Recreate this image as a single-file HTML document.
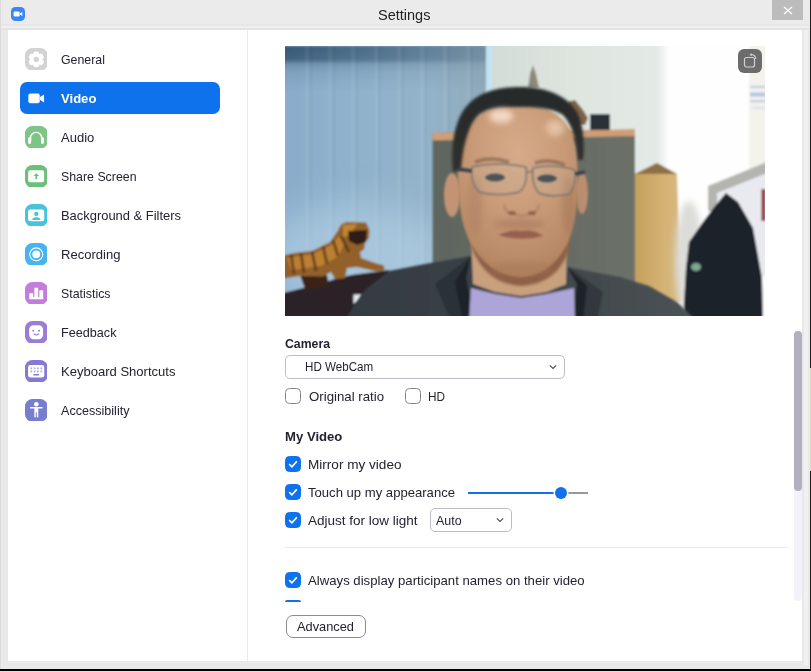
<!DOCTYPE html>
<html><head><meta charset="utf-8"><title>Settings</title>
<style>
html,body{margin:0;padding:0}
body{width:811px;height:672px;overflow:hidden;position:relative;background:#e9e9e9;font-family:"Liberation Sans",sans-serif;color:#232333;font-size:13.3px}
.abs{position:absolute}
.t{position:absolute;white-space:nowrap;line-height:20px;height:20px;transform-origin:0 50%}
#content{left:8px;top:30px;width:794px;height:631px;background:#fff}
#divider{left:247px;top:30px;width:1px;height:631px;background:#eaeaf0}
.ic{position:absolute;left:24.7px;width:22.6px;height:22.6px}
.cb{position:absolute;width:14px;height:14px;border:1px solid #84848e;border-radius:4.5px;background:#fff}
.cb.on{border-color:#0e72ed;background:#0e72ed}
.cb svg{position:absolute;left:0;top:0}
</style></head><body>
<!-- title bar -->
<div class="abs" style="left:0;top:0;width:811px;height:30px;background:#ebebeb"></div>
<div class="abs" style="left:0;top:24px;width:811px;height:2px;background:#e7e7e7"></div>
<div class="abs" style="left:0;top:26px;width:811px;height:2px;background:#efefef"></div>
<div class="abs" style="left:0;top:28px;width:811px;height:2px;background:#e3e3e3"></div>
<div class="abs" id="zicon" style="left:11px;top:7px;width:14px;height:14px;border-radius:4.5px;background:#3b86f5">
<svg width="14" height="14" viewBox="0 0 14 14" style="position:absolute;left:0;top:0"><rect x="2.6" y="4.5" width="6" height="5" rx="1.2" fill="#fff"/><path d="M8.9 6.5 L11.3 4.9 V9.1 L8.9 7.5Z" fill="#fff"/></svg></div>
<div class="abs" id="close" style="left:772px;top:0;width:31px;height:19.5px;background:#bcbcbc">
<svg width="31" height="20" viewBox="0 0 31 20" style="position:absolute;left:0;top:0"><path d="M12 7 L20 14 M20 7 L12 14" stroke="#fff" stroke-width="1.4" fill="none"/></svg></div>

<div class="abs" id="content"></div>
<div class="abs" id="divider"></div>

<!-- sidebar -->
<div class="abs" id="sel" style="left:20px;top:82px;width:200px;height:31.6px;border-radius:7px;background:#0e72ed"></div>
<svg class="ic" style="top:47.6px" viewBox="0 0 23 23"><rect width="23" height="23" rx="7.5" fill="#d3d3d3"/><g fill="#fff"><circle cx="11.5" cy="11.6" r="6.3"/><rect x="8.6" y="3.5" width="5.8" height="16.2" rx="2.2"/><rect x="8.6" y="3.5" width="5.8" height="16.2" rx="2.2" transform="rotate(60 11.5 11.6)"/><rect x="8.6" y="3.5" width="5.8" height="16.2" rx="2.2" transform="rotate(120 11.5 11.6)"/></g><circle cx="11.5" cy="11.6" r="2.7" fill="#d3d3d3"/></svg>
<svg class="ic" style="top:86.6px" viewBox="0 0 23 23"><rect x="3.4" y="6.6" width="11.6" height="10" rx="2" fill="#fff"/><path d="M15.3 10.3 L19.4 7.7 V15.7 L15.3 13.1Z" fill="#fff"/></svg>
<svg class="ic" style="top:125.6px" viewBox="0 0 23 23"><rect width="23" height="23" rx="7.5" fill="#7cc584"/><path d="M5.6 15 V12.2 A5.7 5.7 0 0 1 17 12.2 V15" fill="none" stroke="#fff" stroke-width="1.5"/><rect x="3.2" y="11.5" width="3" height="6.8" rx="1.4" fill="#fff"/><rect x="16.3" y="11.5" width="3" height="6.8" rx="1.4" fill="#fff"/></svg>
<svg class="ic" style="top:164.6px" viewBox="0 0 23 23"><rect width="23" height="23" rx="7.5" fill="#6cbf79"/><rect x="3.2" y="5.4" width="16.3" height="12.2" rx="2.2" fill="#fff"/><path d="M11.5 8.5 L14.3 11.3 H12.4 V14.3 H10.6 V11.3 H8.7Z" fill="#6cbf79"/></svg>
<svg class="ic" style="top:203.6px" viewBox="0 0 23 23"><rect width="23" height="23" rx="7.5" fill="#46c4dc"/><rect x="3.1" y="5.6" width="16.5" height="12" rx="2.4" fill="#fff"/><circle cx="11.5" cy="10.2" r="2.2" fill="#46c4dc"/><path d="M7.4 16.4 Q7.4 13.6 11.5 13.6 Q15.6 13.6 15.6 16.4Z" fill="#46c4dc"/></svg>
<svg class="ic" style="top:242.6px" viewBox="0 0 23 23"><rect width="23" height="23" rx="7.5" fill="#47b3ef"/><circle cx="11.45" cy="11.55" r="6.6" fill="none" stroke="#fff" stroke-width="1.1"/><circle cx="11.45" cy="11.55" r="4" fill="#fff"/></svg>
<svg class="ic" style="top:281.6px" viewBox="0 0 23 23"><rect width="23" height="23" rx="7.5" fill="#c17fd9"/><path d="M4.4 17.5 V11.4 H8.3 V17.5Z M9.5 17.5 V5.8 H13.4 V17.5Z M14.6 17.5 V8.3 H18.5 V17.5Z M4.4 15.6 H18.5 V17.5 H4.4Z" fill="#fff"/></svg>
<svg class="ic" style="top:320.6px" viewBox="0 0 23 23"><rect width="23" height="23" rx="7.5" fill="#9b7dd6"/><rect x="4.2" y="4.3" width="14.2" height="14.4" rx="4.6" fill="#fff"/><circle cx="8.4" cy="9.9" r="1.05" fill="#9b7dd6"/><circle cx="14.3" cy="9.9" r="1.05" fill="#9b7dd6"/><path d="M8.8 12.9 Q11.5 15.6 14.3 12.9" fill="none" stroke="#9b7dd6" stroke-width="1.2"/></svg>
<svg class="ic" style="top:359.6px" viewBox="0 0 23 23"><rect width="23" height="23" rx="7.5" fill="#8679d4"/><rect x="3.1" y="5.2" width="16.5" height="12.7" rx="2.4" fill="#fff"/><g fill="#b4ace4"><rect x="5.5" y="7.6" width="1.8" height="1.8"/><rect x="8.9" y="7.6" width="1.8" height="1.8"/><rect x="12.2" y="7.6" width="1.8" height="1.8"/><rect x="15.7" y="7.6" width="1.8" height="1.8"/><rect x="5.5" y="10.7" width="1.8" height="1.8"/><rect x="8.9" y="10.7" width="1.8" height="1.8"/><rect x="12.2" y="10.7" width="1.8" height="1.8"/><rect x="15.7" y="10.7" width="1.8" height="1.8"/></g><rect x="8.4" y="14.3" width="6" height="1.4" rx=".6" fill="#8679d4"/></svg>
<svg class="ic" style="top:398.6px" viewBox="0 0 23 23"><rect width="23" height="23" rx="7.5" fill="#787ecf"/><circle cx="11.5" cy="5.4" r="2.3" fill="#fff"/><path d="M5.1 8.1 H17.8 V9.6 H13.5 V18.7 H12 V13.6 H11 V18.7 H9.5 V9.6 H5.1Z" fill="#fff"/></svg>


<!-- video -->
<div class="abs" id="video" style="left:285px;top:46px;width:480px;height:270px;background:#8fb0cc;overflow:hidden"><svg width="480" height="270" viewBox="0 0 480 270" style="position:absolute;left:0;top:0">
<defs>
<linearGradient id="gCur" x1="0" x2="1" y1="0" y2="0"><stop offset="0" stop-color="#8aaccb"/><stop offset=".3" stop-color="#8fb1cb"/><stop offset=".7" stop-color="#93b3ca"/><stop offset="1" stop-color="#90aaba"/></linearGradient>
<linearGradient id="gCurV" x1="0" x2="0" y1="0" y2="1"><stop offset="0" stop-color="#fff" stop-opacity="0"/><stop offset=".6" stop-color="#fff" stop-opacity="0"/><stop offset="1" stop-color="#fff" stop-opacity=".12"/></linearGradient>
<linearGradient id="gBandM" x1="0" x2="0" y1="0" y2="1"><stop offset="0" stop-color="#fff"/><stop offset=".3" stop-color="#e0e0e0"/><stop offset=".42" stop-color="#555"/><stop offset=".6" stop-color="#222"/><stop offset="1" stop-color="#000"/></linearGradient>
<mask id="mBand"><rect x="-5" y="0" width="210" height="44" fill="url(#gBandM)"/></mask>
<linearGradient id="gCurH" x1="0" x2="1" y1="0" y2="0"><stop offset="0" stop-color="#143450" stop-opacity=".72"/><stop offset=".6" stop-color="#1c3c58" stop-opacity=".5"/><stop offset="1" stop-color="#1c3c58" stop-opacity=".25"/></linearGradient>
<linearGradient id="gWall" x1="0" x2="1" y1="0" y2="0"><stop offset="0" stop-color="#d2dbd7"/><stop offset=".5" stop-color="#dfe5df"/><stop offset=".93" stop-color="#e3e9e6"/><stop offset="1" stop-color="#ffffff"/></linearGradient>
<linearGradient id="gCab" x1="0" x2="1" y1="0" y2="0"><stop offset="0" stop-color="#5f6660"/><stop offset=".5" stop-color="#636962"/><stop offset="1" stop-color="#6c7169"/></linearGradient>
<linearGradient id="gBox" x1="0" x2="1" y1="0" y2="0"><stop offset="0" stop-color="#c4a05e"/><stop offset=".6" stop-color="#d4b274"/><stop offset="1" stop-color="#d8b87e"/></linearGradient>
<radialGradient id="gFace" cx=".5" cy=".28" r=".8"><stop offset="0" stop-color="#d6ab8a"/><stop offset=".45" stop-color="#c99b78"/><stop offset=".8" stop-color="#b98a66"/><stop offset="1" stop-color="#a47856"/></radialGradient>
<linearGradient id="gJack" x1="0" x2="1" y1="0" y2="0"><stop offset="0" stop-color="#343b42"/><stop offset=".45" stop-color="#3b4247"/><stop offset="1" stop-color="#4b5355"/></linearGradient>
<linearGradient id="gHair" x1="0" x2="0" y1="0" y2="1"><stop offset="0" stop-color="#262928"/><stop offset="1" stop-color="#30302e"/></linearGradient>
<filter id="b1" x="-5%" y="-5%" width="110%" height="110%"><feGaussianBlur stdDeviation="1"/></filter>
<filter id="b2" x="-30%" y="-30%" width="160%" height="160%"><feGaussianBlur stdDeviation="3"/></filter>
<filter id="b4" x="-50%" y="-50%" width="200%" height="200%"><feGaussianBlur stdDeviation="16"/></filter>
<filter id="b3" x="-30%" y="-30%" width="160%" height="160%"><feGaussianBlur stdDeviation="1.8"/></filter>
<clipPath id="vc"><rect width="480" height="270"/></clipPath>
</defs>
<g clip-path="url(#vc)">
<rect width="480" height="270" fill="#fff"/>
<g filter="url(#b1)">
<!-- wall -->
<rect x="195" y="-5" width="190" height="280" fill="url(#gWall)"/>
<rect x="383" y="-5" width="110" height="280" fill="#fefefe"/>
<rect x="464" y="-5" width="20" height="150" fill="#f3f3ec"/>
<rect x="465" y="40" width="16" height="1.6" fill="#a9bede"/><rect x="465" y="46.5" width="16" height="4" fill="#b4c6e2"/><rect x="465" y="54.5" width="16" height="1.6" fill="#a9bede"/><rect x="467" y="61" width="14" height="1.6" fill="#d0d8ea"/>
<!-- curtain -->
<rect x="-5" y="-5" width="206" height="280" fill="url(#gCur)"/>
<rect x="-5" y="0" width="206" height="44" fill="url(#gCurH)" mask="url(#mBand)"/>
<rect x="-5" y="0" width="206" height="275" fill="url(#gCurV)"/>
<path d="M22 0V270M45 0V270M68 0V270M91 0V270M114 0V270M137 0V270M160 0V270M183 0V270" stroke="#fff" stroke-width="3" opacity=".07"/>
<path d="M26 0V270M49 0V270M72 0V270M95 0V270M118 0V270M141 0V270M164 0V270M187 0V270" stroke="#204060" stroke-width="2" opacity=".06"/>
<rect x="201" y="-5" width="6" height="140" fill="#c2e4f2"/>
<ellipse cx="70" cy="205" rx="90" ry="50" fill="#b8d6ea" opacity=".5" filter="url(#b4)"/>
<!-- items on cabinet -->
<path d="M248 19 L251 28 L254 42 L243 42 L245 28Z" fill="#8e887c"/>
<path d="M282 56 L290 54 L298 64 L303 72 L300 79 L288 78Z" fill="#7c6446"/>
<rect x="305" y="68" width="20" height="16" fill="#2b3038"/>
<!-- cabinet -->
<path d="M147.5 87 L350 83.5 L350 277 L147.5 277Z" fill="url(#gCab)"/>
<path d="M147.5 87 L350 83.5 L350 90 L147.5 94.5Z" fill="#cf9e74"/>
<!-- box -->
<path d="M350 128 L372 117 L392 128 L396 256 L350 256Z" fill="url(#gBox)"/>
<path d="M350 128 L372 117 L392 128Z" fill="#8e7044"/>
<ellipse cx="404" cy="215" rx="14" ry="60" fill="#dcdcd8" filter="url(#b2)"/>
<!-- window / blinds right -->
<path d="M432 145 L482 120 L482 230 L432 230Z" fill="#e8eaf0"/>
<path d="M423 140 L482 116 L482 127 L432 147 L432 165 L423 165Z" fill="#b4b4b0"/>
<rect x="476.5" y="143" width="4" height="32" fill="#8c3038"/>
<!-- coat -->
<path d="M441 147 L453 156 L468 182 L477 232 L478 275 L398 275 L401 222 L404 196 L418 176 L430 160Z" fill="#1e242c"/>
<ellipse cx="411" cy="221" rx="5" ry="4" fill="#7fa890"/>
<!-- table base + tiger -->
<path d="M-2 247 L14 243 L30 239 L50 233 L66 229 L104 224 L106 230 L90 240 L80 250 L66 275 L-2 275Z" fill="#2a2127"/>
<path d="M15 229 L42 229 L44 241 L20 243Z" fill="#3a2418"/>
<path d="M-2 209.5 L12 206.5 L27 205 L45 196 L52 186 L56 178.5 L61 176 L81 176.5 L84.5 184 L84 192 L80 197 L79 203.5 L75 206 L76 212 L90 217 L99 219.5 L99.5 224.5 L90 225 L72 221 L62 222 L60 232.5 L50 233 L46 226 L38 230.5 L15 230 L-2 232.5Z" fill="#93602a"/>
<path d="M2 212 L28 208 L46 199 L54 190 L60 196 L54 210 L36 220 L6 224Z" fill="#bd8032"/>
<path d="M58 179 L72 178 L66 188 L58 192Z" fill="#c08436"/>
<path d="M63 185 L82 184 L81 196 L72 199 L64 195Z" fill="#2e1c14"/>
<path d="M6 208 l3 20 M16 207 l3 20 M27 205 l4 20 M38 200 l4 18 M48 194 l5 16 M56 190 l8 16" stroke="#54301a" stroke-width="3" opacity=".75"/>
<rect x="68.5" y="248.5" width="7.5" height="9" fill="#e4ecf2"/>
</g>
<!-- person -->
<g filter="url(#b1)">
<!-- jacket -->
<path d="M60 275 L69 259 L80 244 L104 225 L140 218 L186 210 L200 240 L280 240 L282 221 L335 231 L364 240 L392 256 L412 275Z" fill="url(#gJack)"/>
<path d="M186 210 L176 232 L194 275 L166 275 L150 238Z" fill="#2c3238"/>
<path d="M186 210 L181 232 L190 275 L178 275 L170 236Z" fill="#1c2026"/>
<path d="M282 220 L296 238 L286 275 L312 275 L318 246Z" fill="#33393e"/>
<path d="M282 221 L292 238 L288 275 L298 275 L302 240Z" fill="#1e2228"/>
<!-- shirt -->
<path d="M186 242 L210 248 L236 252 L262 248 L289 242 L290 275 L184 275Z" fill="#ada4d8"/>
<!-- neck -->
<path d="M186 190 L282 190 L281 238 L262 246 L236 250 L210 246 L188 238Z" fill="#c9a07e"/>
<!-- ears -->
<ellipse cx="167" cy="149" rx="8" ry="22" fill="#c29474"/>
<ellipse cx="297" cy="147" rx="6" ry="21" fill="#bb8e70"/>
</g>
<!-- under chin shadow -->
<g filter="url(#b3)"><path d="M186 200 Q200 238 236 240 Q272 238 284 204 L284 190 L186 190Z" fill="#8e6046"/></g>
<g filter="url(#b1)">
<!-- face -->
<path d="M173 112 C174 76 198 58 233 58 C268 58 291 76 292 112 C294 146 292 172 284 194 C274 218 256 230 236 231 C214 230 196 218 184 194 C174 172 172 146 173 112Z" fill="url(#gFace)"/>
</g>
<g filter="url(#b3)">
<!-- hair -->
<path d="M168 126 C165 100 170 75 180 62 C192 47 210 41 236 41 C262 41 282 50 292 66 C298 78 300 96 298 114 L293 114 C292 96 288 80 278 69 C268 62 250 61 236 61 C218 61 202 62 193 69 C183 80 178 100 176 124Z" fill="url(#gHair)"/>
</g>
<g filter="url(#b2)">
<ellipse cx="216" cy="70" rx="12" ry="7" fill="#f8e0cc" opacity=".9"/>
<ellipse cx="270" cy="82" rx="9" ry="8" fill="#f0d2b8" opacity=".7"/>
<ellipse cx="236" cy="222" rx="30" ry="7" fill="#a87858" opacity=".5"/>
<ellipse cx="234" cy="178" rx="26" ry="5" fill="#9c6c54" opacity=".45"/>
<ellipse cx="190" cy="160" rx="8" ry="30" fill="#a87a5e" opacity=".4"/>
<ellipse cx="284" cy="160" rx="7" ry="30" fill="#a07256" opacity=".45"/>
</g>
<g filter="url(#b1)">
<!-- brows / eyes -->
<path d="M190 116 Q206 110 224 116" stroke="#6a4c3c" stroke-width="3.5" fill="none" opacity=".5"/>
<path d="M250 117 Q264 112 280 119" stroke="#6a4c3c" stroke-width="3.5" fill="none" opacity=".5"/>
<ellipse cx="210" cy="131.5" rx="10" ry="4" fill="#2c3a44"/>
<ellipse cx="262" cy="132.5" rx="10" ry="4" fill="#2c3a44"/>
<!-- glasses -->
<path d="M187 121 Q212 115 241 121 Q243 140 234 146 Q212 151 194 146 Q185 136 187 121Z" fill="#c8b8ac" fill-opacity=".2" stroke="#7a746e" stroke-width="1.5"/>
<path d="M248 122 Q268 117 290 124 Q291 140 284 148 Q266 152 254 147 Q246 138 248 122Z" fill="#c8b8ac" fill-opacity=".2" stroke="#7a746e" stroke-width="1.5"/>
<path d="M241 127 Q245 124 248 127" stroke="#7a746e" stroke-width="1.5" fill="none"/>
<path d="M187 125 L173 123 M290 128 L300 126" stroke="#3a3f4a" stroke-width="3.4"/>
<!-- nose -->
<path d="M219 158 Q220 167 228 168 Q236 171 245 168 Q253 167 254 158" stroke="#a87a60" stroke-width="2.5" fill="none" opacity=".55"/>
<ellipse cx="227" cy="167" rx="4" ry="2" fill="#85543e" opacity=".75"/>
<ellipse cx="247" cy="167" rx="4" ry="2" fill="#85543e" opacity=".75"/>
<!-- mouth -->
<path d="M213 189 Q226 183 236 185 Q248 183 258 190 Q236 196 213 189Z" fill="#96604e"/>
</g>
</g>
</svg>
</div>
<div class="abs" id="rot" style="left:738px;top:49px;width:24px;height:24px;border-radius:6px;background:#6c6c6c">
<svg width="24" height="24" viewBox="0 0 24 24" style="position:absolute;left:0;top:0"><rect x="6.5" y="8.5" width="10" height="9.5" rx="2" fill="none" stroke="#d0d0d0" stroke-width="1.2"/><path d="M12 5.6 Q17.6 5.2 17.8 10" fill="none" stroke="#d0d0d0" stroke-width="1.1"/><path d="M13.6 4 L11.6 5.7 L13.8 7.2Z" fill="#d0d0d0"/></svg></div>

<!-- controls -->
<div class="abs" id="sel1" style="left:285px;top:355px;width:278px;height:22px;border:1px solid #bcbcc8;border-radius:5px;background:#fff"></div>
<svg class="abs" style="left:547.5px;top:362.5px" width="10" height="8" viewBox="0 0 10 8"><path d="M1.8 2.3 L5 5.5 L8.2 2.3" stroke="#4a4a55" stroke-width="1.1" fill="none"/></svg>
<div class="cb" style="left:285px;top:388px"></div>
<div class="cb" style="left:405px;top:388px"></div>

<div class="cb on" style="left:285px;top:456px"><svg width="14" height="14" viewBox="0 0 14 14"><path d="M3.2 7.2 L5.9 9.8 L10.8 4.4" stroke="#fff" stroke-width="1.6" fill="none"/></svg></div>
<div class="cb on" style="left:285px;top:484px"><svg width="14" height="14" viewBox="0 0 14 14"><path d="M3.2 7.2 L5.9 9.8 L10.8 4.4" stroke="#fff" stroke-width="1.6" fill="none"/></svg></div>
<div class="abs" style="left:468px;top:492px;width:94px;height:2px;background:#0e72ed"></div>
<div class="abs" style="left:562px;top:492px;width:26px;height:2px;background:#9a93aa"></div>
<div class="abs" style="left:555px;top:487px;width:12px;height:12px;border-radius:6px;background:#0e72ed;box-shadow:0 0 0 1.5px #fff"></div>
<div class="cb on" style="left:285px;top:512px"><svg width="14" height="14" viewBox="0 0 14 14"><path d="M3.2 7.2 L5.9 9.8 L10.8 4.4" stroke="#fff" stroke-width="1.6" fill="none"/></svg></div>
<div class="abs" id="sel2" style="left:430px;top:508px;width:80px;height:22px;border:1px solid #bcbcc8;border-radius:5px;background:#fff"></div>
<svg class="abs" style="left:495px;top:516px" width="10" height="8" viewBox="0 0 10 8"><path d="M1.8 2.3 L5 5.5 L8.2 2.3" stroke="#4a4a55" stroke-width="1.1" fill="none"/></svg>

<div class="abs" style="left:285px;top:547px;width:503px;height:1px;background:#e8e8ec"></div>

<div class="cb on" style="left:285px;top:572px"><svg width="14" height="14" viewBox="0 0 14 14"><path d="M3.2 7.2 L5.9 9.8 L10.8 4.4" stroke="#fff" stroke-width="1.6" fill="none"/></svg></div>
<div class="abs" style="left:285px;top:600px;width:16px;height:2px;border-radius:4px 4px 0 0;background:#0e72ed"></div>

<div class="abs" id="adv" style="left:286px;top:615px;width:78px;height:21px;border:1px solid #8a8a94;border-radius:7px;background:#fff"></div>

<span class="t" id="title" style="left:378.1px;top:5.03px;font-size:15.2px;transform:scaleX(0.9546);color:#222">Settings</span>
<span class="t" id="s1" style="left:61.1px;top:50.29px;font-size:13.3px;transform:scaleX(0.9300)">General</span>
<span class="t" id="s2" style="left:61.1px;top:89.29px;font-size:13.3px;transform:scaleX(0.9842);font-weight:bold;color:#fff">Video</span>
<span class="t" id="s3" style="left:61.1px;top:128.29px;font-size:13.3px;transform:scaleX(0.9790)">Audio</span>
<span class="t" id="s4" style="left:61.1px;top:167.29px;font-size:13.3px;transform:scaleX(0.9285)">Share Screen</span>
<span class="t" id="s5" style="left:61.1px;top:206.29px;font-size:13.3px;transform:scaleX(0.9723)">Background &amp; Filters</span>
<span class="t" id="s6" style="left:61.1px;top:245.29px;font-size:13.3px;transform:scaleX(0.9817)">Recording</span>
<span class="t" id="s7" style="left:61.1px;top:284.29px;font-size:13.3px;transform:scaleX(0.9304)">Statistics</span>
<span class="t" id="s8" style="left:61.1px;top:323.29px;font-size:13.3px;transform:scaleX(0.9502)">Feedback</span>
<span class="t" id="s9" style="left:61.1px;top:362.29px;font-size:13.3px;transform:scaleX(0.9803)">Keyboard Shortcuts</span>
<span class="t" id="s10" style="left:61.1px;top:401.29px;font-size:13.3px;transform:scaleX(0.9458)">Accessibility</span>
<span class="t" id="c1" style="left:285.1px;top:333.69px;font-size:13.3px;transform:scaleX(0.9222);font-weight:bold">Camera</span>
<span class="t" id="c2" style="left:305.1px;top:357.13px;font-size:12.6px;transform:scaleX(0.9222)">HD WebCam</span>
<span class="t" id="c3" style="left:308.5px;top:386.89px;font-size:13.3px;transform:scaleX(0.9948)">Original ratio</span>
<span class="t" id="c4" style="left:427.8px;top:386.89px;font-size:13.3px;transform:scaleX(0.8846)">HD</span>
<span class="t" id="m0" style="left:285.1px;top:426.89px;font-size:13.3px;transform:scaleX(0.9873);font-weight:bold">My Video</span>
<span class="t" id="m1" style="left:308.40000000000003px;top:454.89px;font-size:13.3px;transform:scaleX(1.0205)">Mirror my video</span>
<span class="t" id="m2" style="left:308.1px;top:482.89px;font-size:13.3px;transform:scaleX(0.9844)">Touch up my appearance</span>
<span class="t" id="m3" style="left:308.1px;top:510.89px;font-size:13.3px;transform:scaleX(1.0157)">Adjust for low light</span>
<span class="t" id="m4" style="left:436.3px;top:511.13px;font-size:12.6px;transform:scaleX(0.9876)">Auto</span>
<span class="t" id="m5" style="left:307.90000000000003px;top:570.89px;font-size:13.3px;transform:scaleX(0.9904)">Always display participant names on their video</span>
<span class="t" id="advt" style="left:296.6px;top:617.19px;font-size:13.3px;transform:scaleX(0.9635)">Advanced</span>

<!-- scrollbar -->
<div class="abs" style="left:794px;top:331px;width:8px;height:270px;background:#f3f2fa;border-radius:4px"></div>
<div class="abs" style="left:794px;top:331px;width:8px;height:160px;background:#b1afc0;border-radius:4px"></div>

<!-- window borders -->
<div class="abs" style="left:0;top:661px;width:811px;height:8px;background:#e9e9e9"></div>
<div class="abs" style="left:0;top:669px;width:811px;height:2px;background:#000"></div>
<div class="abs" style="left:0;top:671px;width:811px;height:1px;background:#ddd"></div>
<div class="abs" style="left:0;top:0;width:1px;height:669px;background:#dadada"></div>
<div class="abs" style="left:804px;top:30px;width:4px;height:635px;background:#f1f1f1"></div>
<div class="abs" style="left:809.8px;top:0;width:1.2px;height:669px;background:#1e1e1e"></div>
<div class="abs" style="left:809.8px;top:368px;width:1.2px;height:103px;background:#d8dcc0"></div>
</body></html>
